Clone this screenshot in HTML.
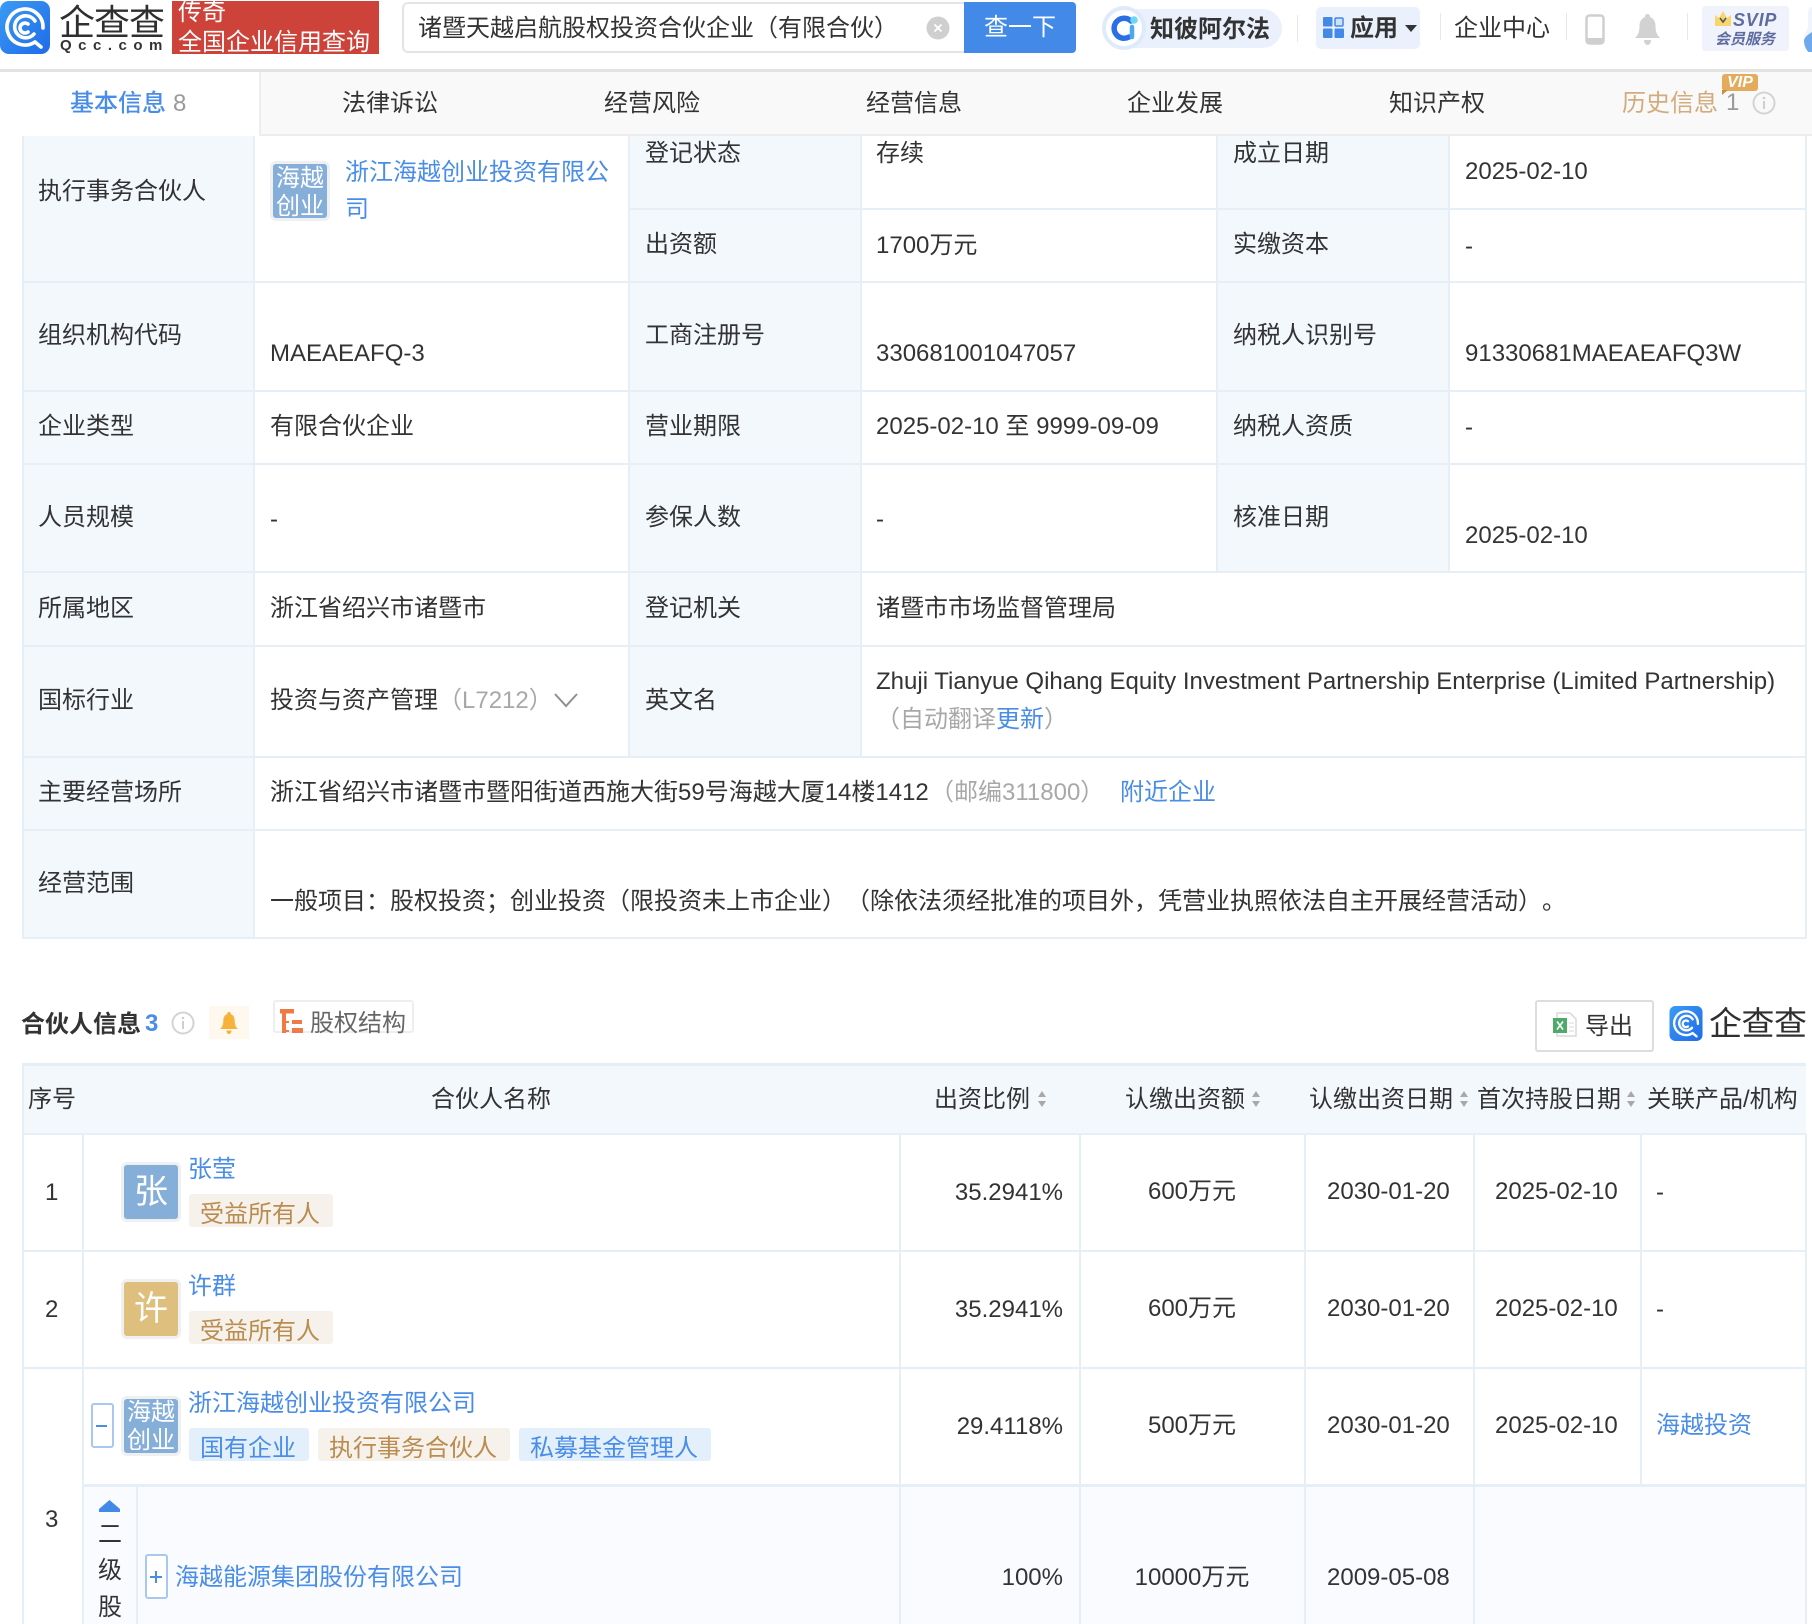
<!DOCTYPE html>
<html lang="zh"><head><meta charset="utf-8"><title>企查查</title>
<style>
html,body{margin:0;padding:0;background:#fff}
#p{position:relative;width:1812px;height:1624px;overflow:hidden;background:#fff;font-family:"Liberation Sans","Noto Sans CJK SC",sans-serif;font-size:24px;color:#333;text-spacing-trim:space-all}
.t{position:absolute;white-space:nowrap;line-height:32px;height:32px;margin-top:2px}
.b{position:absolute;box-sizing:border-box}
.hl{position:absolute;height:2px;background:#e6eef6}
.vl{position:absolute;width:2px;background:#e6eef6}
.lb{position:absolute;background:#f3f8fd}
.a{color:#4a8de8}
.g{color:#a8a8a8}
.av{position:absolute;box-sizing:border-box;width:60px;height:60px;border:3px solid #eef0f2;border-radius:6px;background:#85aed8;color:#fff;text-align:center}
.tag{position:absolute;height:33px;line-height:42px;padding:0 13px 0 11px;border-radius:3px;white-space:nowrap;box-sizing:border-box;overflow:hidden}
.br{background:#f6f1ea;color:#b98c50}
.bl{background:#e3f0fb;color:#4a8de8}
svg{position:absolute;display:block}
</style></head><body><div id="p">

<!-- header -->
<svg style="left:0;top:1px" width="50" height="53" viewBox="0 0 50 53"><defs><linearGradient id="lg" x1="0" y1="0" x2="1" y2="1"><stop offset="0" stop-color="#3b9bf5"/><stop offset="1" stop-color="#1f6be8"/></linearGradient></defs><rect width="50" height="53" rx="9" fill="url(#lg)"/><g fill="none" stroke="#fff" stroke-width="3.6" stroke-linecap="round"><path d="M35 41A18 18 0 1 1 43 27"/><path d="M34 33A11 11 0 1 1 35 20"/><path d="M28 23A5 5 0 1 0 28 31"/><path d="M35 41L41 46"/></g></svg>
<div class="t" style="left:59px;top:3px;font-size:36px;line-height:36px;height:36px;letter-spacing:-1px;color:#2f2f2f;font-weight:400">企查查</div>
<div class="t" style="left:60px;top:36px;font-size:15px;line-height:16px;height:16px;font-weight:700;letter-spacing:6.5px;color:#333">Qcc.com</div>
<div class="b" style="left:172px;top:1px;width:207px;height:53px;background:#cd4239;overflow:hidden;color:#fff"><div class="t" style="left:6px;top:-6px">传奇</div><div class="t" style="left:6px;top:24px">全国企业信用查询</div></div>

<div class="b" style="left:402px;top:2px;width:570px;height:51px;border:2px solid #e4e4e4;border-radius:6px 0 0 6px"></div>
<div class="t" style="left:418px;top:11px">诸暨天越启航股权投资合伙企业（有限合伙）</div>
<svg style="left:926px;top:16px" width="24" height="24"><circle cx="12" cy="12" r="11.5" fill="#cfcfcf"/><path d="M8.5 8.5l7 7M15.5 8.5l-7 7" stroke="#fff" stroke-width="1.8"/></svg>
<div class="b" style="left:964px;top:2px;width:112px;height:51px;background:#4289e8;border-radius:0 4px 4px 0;color:#fff;text-align:center;line-height:52px">查一下</div>

<div class="b" style="left:1104px;top:9px;width:178px;height:39px;background:#eaf1fc;border-radius:20px"></div>
<svg style="left:1102px;top:6px" width="44" height="44"><circle cx="22" cy="22" r="20" fill="#fff" stroke="#dfeafb" stroke-width="4"/><path d="M29 15A10 10 0 1 0 27 31" fill="none" stroke="#2a6fe6" stroke-width="5.5" stroke-linecap="round"/><path d="M30 21v10" stroke="#4aa8f2" stroke-width="4.5" stroke-linecap="round"/><circle cx="32" cy="14" r="3.8" fill="#6fd6f6"/></svg>
<div class="t" style="left:1150px;top:12px;font-weight:700;color:#333">知彼阿尔法</div>
<div class="b" style="left:1297px;top:15px;width:1px;height:27px;background:#e8e8e8"></div>

<div class="b" style="left:1316px;top:7px;width:104px;height:42px;background:#eaf1fc;border-radius:5px"></div>
<svg style="left:1323px;top:17px" width="21" height="21"><rect width="9.5" height="9.5" rx="1" fill="#4289e8"/><rect x="12" y="1" width="8" height="8" rx="1" fill="#cfe0f8" stroke="#4289e8" stroke-width="1.5"/><rect y="11.5" width="9.5" height="9.5" rx="1" fill="#4289e8"/><rect x="11.5" y="11.5" width="9.5" height="9.5" rx="1" fill="#4289e8"/></svg>
<div class="t" style="left:1350px;top:11px;font-weight:700;color:#333">应用</div>
<svg style="left:1405px;top:25px" width="12" height="7"><path d="M0 0h12L6 7z" fill="#333"/></svg>
<div class="b" style="left:1440px;top:13px;width:1px;height:27px;background:#e8e8e8"></div>
<div class="t" style="left:1454px;top:11px">企业中心</div>
<div class="b" style="left:1566px;top:13px;width:1px;height:27px;background:#e8e8e8"></div>
<svg style="left:1585px;top:14px" width="20" height="31"><rect x="1.5" y="1.5" width="17" height="28" rx="3" fill="none" stroke="#cfcfcf" stroke-width="2.5"/><rect x="2" y="24" width="16" height="5" fill="#cfcfcf"/></svg>
<svg style="left:1635px;top:14px" width="25" height="31" viewBox="0 0 25 31"><path d="M12.5 0c2 0 2.500 1.500 2.500 3 4 1.500 5.500 5 5.500 9 0 6 1.500 9 4.500 12H0c3-3 4.500-6 4.500-12 0-4 1.500-7.500 5.500-9 0-1.500.5-3 2.500-3z" fill="#d2d2d2"/><path d="M9 26h7c0 3-1.500 5-3.500 5S9 29 9 26z" fill="#d2d2d2"/></svg>
<div class="b" style="left:1687px;top:13px;width:1px;height:27px;background:#e8e8e8"></div>
<div class="b" style="left:1702px;top:6px;width:87px;height:45px;background:#f1f3fc;border-radius:3px"></div>
<svg style="left:1715px;top:11px" width="16" height="15"><path d="M0 4l4 3 4-7 4 7 4-3v11H0z" fill="#f8d66d"/><path d="M5 7l3 4 3-4" fill="none" stroke="#555" stroke-width="1.6"/></svg>
<div class="t" style="left:1733px;top:2px;font-size:18px;font-weight:700;font-style:italic;color:#5f6ca0;letter-spacing:.8px">SVIP</div>
<div class="t" style="left:1715px;top:22px;font-size:15px;font-weight:700;font-style:italic;color:#5f6ca0">会员服务</div>
<svg style="left:1804px;top:6px" width="8" height="46"><path d="M8 1C5 1 4 3 4 8v12c0 4-4 8-4 13 0 7 4 13 8 16z" fill="#f0f4fc"/><path d="M8 26c-3 2-8 5-8 9 0 6 4 12 8 14z" fill="#6ea9ee"/></svg>

<div class="b" style="left:0;top:69px;width:1812px;height:3px;background:#e2e2e2"></div>

<!-- tabs -->
<div class="b" style="left:0;top:72px;width:1812px;height:64px;background:#f9f9f9;border-bottom:2px solid #ededed"></div>
<div class="b" style="left:0;top:72px;width:259px;height:64px;background:#fff"></div>
<div class="b" style="left:259px;top:72px;width:2px;height:64px;background:#eee"></div>
<div class="t a" style="left:70px;top:86px;font-weight:500">基本信息</div><div class="t" style="left:173px;top:86px;color:#9a9a9a">8</div>
<div class="t" style="left:342px;top:86px">法律诉讼</div>
<div class="t" style="left:604px;top:86px">经营风险</div>
<div class="t" style="left:866px;top:86px">经营信息</div>
<div class="t" style="left:1127px;top:86px">企业发展</div>
<div class="t" style="left:1389px;top:86px">知识产权</div>
<div class="t" style="left:1622px;top:86px;color:#d3ab7c">历史信息</div>
<div class="t" style="left:1726px;top:85px;color:#9a9a9a">1</div>
<svg style="left:1752px;top:91px" width="24" height="24"><circle cx="12" cy="12" r="10.500" fill="none" stroke="#d4d4d4" stroke-width="2"/><path d="M12 10v8" stroke="#cfcfcf" stroke-width="2"/><circle cx="12" cy="7" r="1.300" fill="#cfcfcf"/></svg>
<div class="b" style="left:1722px;top:74px;width:36px;height:17px;background:#e4ab5c;border-radius:3px;color:#fff;font-size:16px;line-height:17px;font-weight:700;font-style:italic;text-align:center">VIP</div>
<svg style="left:1722px;top:90px" width="6" height="5"><path d="M0 0h6L0 5z" fill="#c98e42"/></svg>

<!-- basic table -->
<div class="lb" style="left:22px;top:136px;width:232px;height:802px"></div>
<div class="lb" style="left:629px;top:136px;width:232px;height:510px"></div>
<div class="lb" style="left:1217px;top:136px;width:232px;height:146px"></div>
<div class="lb" style="left:1217px;top:282px;width:232px;height:290px"></div>
<div class="lb" style="left:629px;top:646px;width:232px;height:111px"></div>

<div class="vl" style="left:22px;top:136px;height:803px"></div>
<div class="vl" style="left:253px;top:136px;height:803px"></div>
<div class="vl" style="left:628px;top:136px;height:621px"></div>
<div class="vl" style="left:860px;top:136px;height:621px"></div>
<div class="vl" style="left:1216px;top:136px;height:436px"></div>
<div class="vl" style="left:1448px;top:136px;height:436px"></div>
<div class="vl" style="left:1805px;top:136px;height:803px"></div>
<div class="hl" style="left:629px;top:208px;width:1177px"></div>
<div class="hl" style="left:22px;top:281px;width:1784px"></div>
<div class="hl" style="left:22px;top:390px;width:1784px"></div>
<div class="hl" style="left:22px;top:463px;width:1784px"></div>
<div class="hl" style="left:22px;top:571px;width:1784px"></div>
<div class="hl" style="left:22px;top:645px;width:1784px"></div>
<div class="hl" style="left:22px;top:756px;width:1784px"></div>
<div class="hl" style="left:22px;top:829px;width:1784px"></div>
<div class="hl" style="left:22px;top:937px;width:1784px"></div>

<div class="t" style="left:38px;top:174px">执行事务合伙人</div>
<div class="av" style="left:270px;top:161px;font-size:24px;line-height:28px;padding-top:1px;width:60px;height:60px;overflow:hidden">海越<br>创业</div>
<div class="t a" style="left:345px;top:155px">浙江海越创业投资有限公</div>
<div class="t a" style="left:345px;top:192px">司</div>
<div class="t" style="left:645px;top:136px">登记状态</div>
<div class="t" style="left:876px;top:136px">存续</div>
<div class="t" style="left:1233px;top:136px">成立日期</div>
<div class="t" style="left:1465px;top:154px">2025-02-10</div>
<div class="t" style="left:645px;top:227px">出资额</div>
<div class="t" style="left:876px;top:228px">1700万元</div>
<div class="t" style="left:1233px;top:227px">实缴资本</div>
<div class="t" style="left:1465px;top:229px">-</div>

<div class="t" style="left:38px;top:318px">组织机构代码</div>
<div class="t" style="left:270px;top:336px">MAEAEAFQ-3</div>
<div class="t" style="left:645px;top:318px">工商注册号</div>
<div class="t" style="left:876px;top:336px">330681001047057</div>
<div class="t" style="left:1233px;top:318px">纳税人识别号</div>
<div class="t" style="left:1465px;top:336px">91330681MAEAEAFQ3W</div>

<div class="t" style="left:38px;top:409px">企业类型</div>
<div class="t" style="left:270px;top:409px">有限合伙企业</div>
<div class="t" style="left:645px;top:409px">营业期限</div>
<div class="t" style="left:876px;top:409px">2025-02-10 至 9999-09-09</div>
<div class="t" style="left:1233px;top:409px">纳税人资质</div>
<div class="t" style="left:1465px;top:410px">-</div>

<div class="t" style="left:38px;top:500px">人员规模</div>
<div class="t" style="left:270px;top:502px">-</div>
<div class="t" style="left:645px;top:500px">参保人数</div>
<div class="t" style="left:876px;top:502px">-</div>
<div class="t" style="left:1233px;top:500px">核准日期</div>
<div class="t" style="left:1465px;top:518px">2025-02-10</div>

<div class="t" style="left:38px;top:591px">所属地区</div>
<div class="t" style="left:270px;top:591px">浙江省绍兴市诸暨市</div>
<div class="t" style="left:645px;top:591px">登记机关</div>
<div class="t" style="left:876px;top:591px">诸暨市市场监督管理局</div>

<div class="t" style="left:38px;top:683px">国标行业</div>
<div class="t" style="left:270px;top:683px">投资与资产管理</div>
<div class="t g" style="left:438px;top:683px">（L7212）</div>
<svg style="left:554px;top:692px" width="24" height="16"><path d="M1 2l11 12L23 2" fill="none" stroke="#8f8f8f" stroke-width="2"/></svg>
<div class="t" style="left:645px;top:683px">英文名</div>
<div class="t" style="left:876px;top:664px">Zhuji Tianyue Qihang Equity Investment Partnership Enterprise (Limited Partnership)</div>
<div class="t" style="left:876px;top:702px"><span class="g">（自动翻译</span><span class="a">更新</span><span class="g">）</span></div>

<div class="t" style="left:38px;top:775px">主要经营场所</div>
<div class="t" style="left:270px;top:775px">浙江省绍兴市诸暨市暨阳街道西施大街59号海越大厦14楼1412</div>
<div class="t g" style="left:930px;top:775px">（邮编311800）</div>
<div class="t a" style="left:1120px;top:775px">附近企业</div>

<div class="t" style="left:38px;top:866px">经营范围</div>
<div class="t" style="left:270px;top:884px">一般项目：股权投资；创业投资（限投资未上市企业）（除依法须经批准的项目外，凭营业执照依法自主开展经营活动）。</div>

<!-- section -->
<div class="t" style="left:21px;top:1007px;font-weight:700">合伙人信息</div>
<div class="t a" style="left:145px;top:1006px;font-weight:700">3</div>
<svg style="left:171px;top:1011px" width="24" height="24"><circle cx="12" cy="12" r="10.500" fill="none" stroke="#d4d4d4" stroke-width="2"/><path d="M12 10v8" stroke="#cfcfcf" stroke-width="2"/><circle cx="12" cy="7" r="1.300" fill="#cfcfcf"/></svg>
<div class="b" style="left:209px;top:1006px;width:40px;height:33px;background:#fef8ee"></div>
<svg style="left:219px;top:1012px" width="20" height="22" viewBox="0 0 25 31"><path d="M12.5 0c2 0 2.500 1.500 2.500 3 4 1.500 5.500 5 5.500 9 0 6 1.500 9 4.500 12H0c3-3 4.500-6 4.500-12 0-4 1.500-7.500 5.500-9 0-1.500.5-3 2.500-3z" fill="#f7b23b"/><path d="M9 26h7c0 3-1.500 5-3.500 5S9 29 9 26z" fill="#f7b23b"/></svg>
<div class="b" style="left:273px;top:1000px;width:141px;height:33px;border:2px solid #eee;border-radius:3px"></div>
<svg style="left:280px;top:1009px" width="23" height="24"><g fill="#ef7a45"><rect width="14" height="4.500"/><rect x="2" y="4" width="4" height="20"/><rect x="12" y="11" width="10" height="4"/><rect x="12" y="19" width="11" height="5"/><rect x="5" y="12" width="4" height="2"/><rect x="5" y="21" width="4" height="2"/></g></svg>
<div class="t" style="left:310px;top:1006px;color:#666">股权结构</div>

<div class="b" style="left:1535px;top:1000px;width:119px;height:52px;border:2px solid #ddd;border-radius:3px"></div>
<svg style="left:1553px;top:1012px" width="24" height="25"><path d="M4 1h13l6 6v17H4z" fill="#fff" stroke="#d8d8d8" stroke-width="1.500"/><rect y="6" width="14" height="15" fill="#4fa96b"/><path d="M4 9.500l6 8M10 9.500l-6 8" stroke="#fff" stroke-width="1.600"/><path d="M16 11h5M16 15h5M16 19h5" stroke="#d8d8d8"/></svg>
<div class="t" style="left:1585px;top:1009px">导出</div>
<svg style="left:1668px;top:1006px" width="36" height="35" viewBox="0 0 50 53"><rect width="50" height="53" rx="9" fill="url(#lg)"/><g fill="none" stroke="#fff" stroke-width="3.600" stroke-linecap="round"><path d="M35 41A18 18 0 1 1 43 27"/><path d="M34 33A11 11 0 1 1 35 20"/><path d="M28 23A5 5 0 1 0 28 31"/><path d="M35 41L41 46"/></g></svg>
<div class="t" style="left:1709px;top:1005px;font-size:33px;line-height:34px;height:34px;color:#2f2f2f;font-weight:400;letter-spacing:-.5px">企查查</div>

<!-- partner table -->
<div class="lb" style="left:22px;top:1063px;width:1784px;height:71px"></div>
<div class="b" style="left:82px;top:1484px;width:1724px;height:140px;background:#f9fbfe"></div>
<div class="hl" style="left:22px;top:1063px;width:1784px;height:3px"></div>
<div class="hl" style="left:22px;top:1133px;width:1784px"></div>
<div class="hl" style="left:22px;top:1250px;width:1784px"></div>
<div class="hl" style="left:22px;top:1367px;width:1784px"></div>
<div class="hl" style="left:82px;top:1484px;width:1724px;height:3px"></div>
<div class="vl" style="left:22px;top:1063px;height:561px"></div>
<div class="vl" style="left:82px;top:1134px;height:490px"></div>
<div class="vl" style="left:136px;top:1486px;height:138px"></div>
<div class="vl" style="left:899px;top:1134px;height:490px"></div>
<div class="vl" style="left:1079px;top:1134px;height:490px"></div>
<div class="vl" style="left:1304px;top:1134px;height:490px"></div>
<div class="vl" style="left:1473px;top:1134px;height:490px"></div>
<div class="vl" style="left:1640px;top:1134px;height:351px"></div>
<div class="vl" style="left:1805px;top:1134px;height:490px"></div>

<div class="t" style="left:28px;top:1082px">序号</div>
<div class="t" style="left:431px;top:1082px">合伙人名称</div>
<div class="t" style="left:934px;top:1082px">出资比例</div>
<div class="t" style="left:1125px;top:1082px">认缴出资额</div>
<div class="t" style="left:1309px;top:1082px">认缴出资日期</div>
<div class="t" style="left:1477px;top:1082px">首次持股日期</div>
<div class="t" style="left:1647px;top:1082px">关联产品/机构</div>
<svg style="left:1037px;top:1091px" width="10" height="16"><path d="M5 0l4 6H1zM5 16l4-6H1z" fill="#a8a8a8"/></svg>
<svg style="left:1251px;top:1091px" width="10" height="16"><path d="M5 0l4 6H1zM5 16l4-6H1z" fill="#a8a8a8"/></svg>
<svg style="left:1459px;top:1091px" width="10" height="16"><path d="M5 0l4 6H1zM5 16l4-6H1z" fill="#a8a8a8"/></svg>
<svg style="left:1626px;top:1091px" width="10" height="16"><path d="M5 0l4 6H1zM5 16l4-6H1z" fill="#a8a8a8"/></svg>

<!-- row 1 -->
<div class="t" style="left:45px;top:1175px">1</div>
<div class="av" style="left:121px;top:1162px;font-size:34px;line-height:54px">张</div>
<div class="t a" style="left:188px;top:1152px">张莹</div>
<div class="tag br" style="left:189px;top:1194px">受益所有人</div>
<div class="t" style="left:863px;top:1175px;width:200px;text-align:right">35.2941%</div>
<div class="t" style="left:1080px;top:1174px;width:224px;text-align:center">600万元</div>
<div class="t" style="left:1327px;top:1174px">2030-01-20</div>
<div class="t" style="left:1495px;top:1174px">2025-02-10</div>
<div class="t" style="left:1656px;top:1175px">-</div>

<!-- row 2 -->
<div class="t" style="left:45px;top:1292px">2</div>
<div class="av" style="left:121px;top:1279px;font-size:34px;line-height:54px;background:#dfbf7d">许</div>
<div class="t a" style="left:188px;top:1269px">许群</div>
<div class="tag br" style="left:189px;top:1311px">受益所有人</div>
<div class="t" style="left:863px;top:1292px;width:200px;text-align:right">35.2941%</div>
<div class="t" style="left:1080px;top:1291px;width:224px;text-align:center">600万元</div>
<div class="t" style="left:1327px;top:1291px">2030-01-20</div>
<div class="t" style="left:1495px;top:1291px">2025-02-10</div>
<div class="t" style="left:1656px;top:1292px">-</div>

<!-- row 3 -->
<div class="b" style="left:91px;top:1403px;width:23px;height:45px;border:2px solid #a8c8f0;border-radius:3px;background:#fff"></div>
<div class="b" style="left:96px;top:1425px;width:11px;height:2px;background:#4a8de8"></div>
<div class="av" style="left:121px;top:1396px;font-size:24px;line-height:28px;height:60px;overflow:hidden">海越<br>创业</div>
<div class="t a" style="left:188px;top:1386px">浙江海越创业投资有限公司</div>
<div class="tag bl" style="left:189px;top:1428px">国有企业</div>
<div class="tag br" style="left:318px;top:1428px">执行事务合伙人</div>
<div class="tag bl" style="left:519px;top:1428px">私募基金管理人</div>
<div class="t" style="left:863px;top:1409px;width:200px;text-align:right">29.4118%</div>
<div class="t" style="left:1080px;top:1408px;width:224px;text-align:center">500万元</div>
<div class="t" style="left:1327px;top:1408px">2030-01-20</div>
<div class="t" style="left:1495px;top:1408px">2025-02-10</div>
<div class="t a" style="left:1656px;top:1408px">海越投资</div>

<!-- sub row -->
<div class="t" style="left:45px;top:1502px">3</div>
<svg style="left:99px;top:1500px" width="21" height="12"><path d="M10.500 0L21 9v3H0V9z" fill="#4289e8"/></svg>
<div class="t" style="left:98px;top:1517px">二</div>
<div class="t" style="left:98px;top:1553px">级</div>
<div class="t" style="left:98px;top:1590px">股</div>
<div class="b" style="left:145px;top:1554px;width:23px;height:45px;border:2px solid #a8c8f0;border-radius:3px;background:#fff"></div>
<svg style="left:150px;top:1571px" width="12" height="12"><path d="M6 0v12M0 6h12" stroke="#4a8de8" stroke-width="2"/></svg>
<div class="t a" style="left:175px;top:1560px">海越能源集团股份有限公司</div>
<div class="t" style="left:863px;top:1560px;width:200px;text-align:right">100%</div>
<div class="t" style="left:1080px;top:1560px;width:224px;text-align:center">10000万元</div>
<div class="t" style="left:1327px;top:1560px">2009-05-08</div>
</div></body></html>
